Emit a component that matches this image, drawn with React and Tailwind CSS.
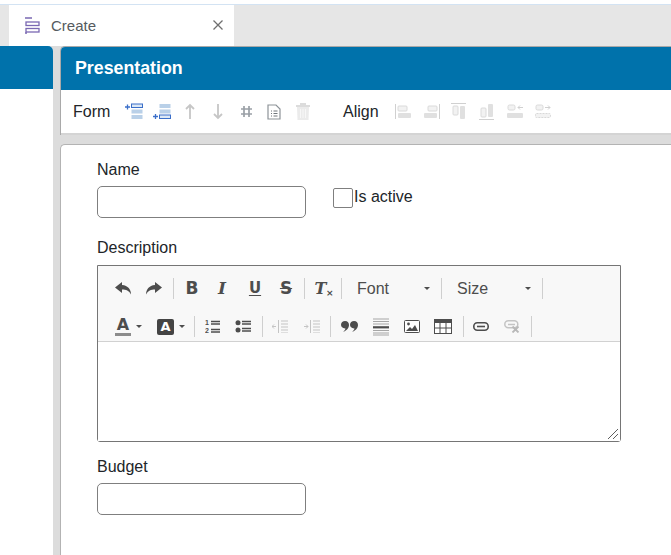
const Ico = ({ w = 16, h = 16, children, className = "" }) => (
  <svg width={w} height={h} viewBox={`0 0 ${w} ${h}`} className={`shrink-0 ${className}`}>{children}</svg>
);

const Sep = ({ className = "" }) => <div className={`w-px h-[21px] bg-[#cfcfcf] shrink-0 ${className}`} />;

const Blue = "#3b6fc9", Pale = "#b9d0e8";

const formIcons = [
  <Ico w={19} h={17} key="a">
    <path d="M0 4h5M2.500 1.500v5" stroke={Blue} strokeWidth="1.300" />
    <rect x="6.500" y="1" width="11" height="3.500" fill="#dce8f5" stroke={Blue} />
    <rect x="6.500" y="6.500" width="11" height="4" fill={Pale} />
    <rect x="6.500" y="12" width="11" height="4" fill={Pale} />
  </Ico>,
  <Ico w={19} h={17} key="b">
    <path d="M0 13.500h5M2.500 11v5" stroke={Blue} strokeWidth="1.300" />
    <rect x="6.500" y="1" width="11" height="4" fill={Pale} />
    <rect x="6.500" y="6.500" width="11" height="4" fill={Pale} />
    <rect x="6.500" y="12" width="11" height="3.500" fill="#dce8f5" stroke={Blue} />
  </Ico>,
  <Ico w={10} h={17} key="c"><path d="M5 16V2M1 6l4-4 4 4" stroke="#c6c6c6" strokeWidth="1.800" fill="none" /></Ico>,
  <Ico w={10} h={17} key="d"><path d="M5 1v14M1 11l4 4 4-4" stroke="#c6c6c6" strokeWidth="1.800" fill="none" /></Ico>,
  <Ico w={13} h={13} key="e"><path d="M4 1v11M9 1v11M1 4h11M1 9h11" stroke="#9aa0a6" strokeWidth="1.700" fill="none" /></Ico>,
  <Ico w={14} h={16} key="f">
    <path d="M1 1h8l4 4v10H1z" fill="#fff" stroke="#8d9398" strokeWidth="1.200" />
    <path d="M4 7h1M6.500 7h4M4 9.500h1M6.500 9.500h4M4 12h1M6.500 12h4" stroke="#70767b" />
  </Ico>,
  <Ico w={16} h={17} key="g">
    <path d="M1 3h14" stroke="#dcdcdc" strokeWidth="2" />
    <path d="M5 1h6" stroke="#dcdcdc" strokeWidth="2" />
    <path d="M2 4h12l-.500 13h-11z" fill="#ebebeb" />
    <path d="M5.500 6v9M8 6v9M10.500 6v9" stroke="#f7f7f7" />
  </Ico>,
];

const alignIcons = [
  <Ico w={17} h={16} key="a"><path d="M.500 0v15" stroke="#d0d0d0" /><rect x="3" y="2" width="9" height="5" rx="1" fill="#f2f2f2" stroke="#dadada" /><rect x="3" y="9" width="13" height="5" rx="1" fill="#e0e0e0" /></Ico>,
  <Ico w={17} h={16} key="b"><path d="M16.500 0v15" stroke="#d0d0d0" /><rect x="5" y="2" width="9" height="5" rx="1" fill="#f2f2f2" stroke="#dadada" /><rect x="1" y="9" width="13" height="5" rx="1" fill="#e0e0e0" /></Ico>,
  <Ico w={16} h={17} key="c"><path d="M0 .500h15" stroke="#d0d0d0" /><rect x="2" y="3" width="5" height="9" rx="1" fill="#f2f2f2" stroke="#dadada" /><rect x="9" y="3" width="5" height="13" rx="1" fill="#e0e0e0" /></Ico>,
  <Ico w={16} h={17} key="d"><path d="M0 16.500h15" stroke="#d0d0d0" /><rect x="2" y="5" width="5" height="9" rx="1" fill="#f2f2f2" stroke="#dadada" /><rect x="9" y="1" width="5" height="13" rx="1" fill="#e0e0e0" /></Ico>,
  <Ico w={17} h={15} key="e"><rect x="1" y="1" width="7" height="5" rx="1.500" fill="#f2f2f2" stroke="#dadada" /><path d="M16 3.500h-5M13 1.500l-2 2 2 2" stroke="#d0d0d0" fill="none" /><rect x="0" y="9" width="16" height="5" rx="1" fill="#e0e0e0" /></Ico>,
  <Ico w={17} h={15} key="f"><rect x="1" y="1" width="7" height="5" rx="1.500" fill="#f2f2f2" stroke="#dadada" /><path d="M10 3.500h5M13 1.500l2 2-2 2" stroke="#d0d0d0" fill="none" /><rect x=".500" y="9.500" width="15" height="4" rx="1" fill="#f2f2f2" stroke="#d8d8d8" strokeDasharray="2 1" /></Ico>,
];

const dark = "#4d4d4d";
const Caret = () => <span className="w-0 h-0 border-x-[3px] border-x-transparent border-t-[3px] border-t-[#4d4d4d] shrink-0" />;

const Tb = ({ w = 24, children }) => (
  <div className="flex items-center justify-center h-[21px] shrink-0" style={{ width: w }}>{children}</div>
);

const Undo = ({ flip }) => (
  <Ico w={17} h={13} className={flip ? "-scale-x-100" : ""}>
    <path d="M7 0L0 5.500 7 11V7.500c4 0 7 1 9 5 0-5-3-9-9-9.500z" fill={dark} />
  </Ico>
);

const Bold = { fontFamily: '"DejaVu Sans", sans-serif' };
const Serif = { fontFamily: '"DejaVu Serif", serif' };

const Select = ({ label, w }) => (
  <div className="flex items-center justify-between pl-[15px] pr-[11px] text-[16px] leading-none text-[#4d4d4d] shrink-0" style={{ width: w }}>
    <span>{label}</span>
    <Caret />
  </div>
);

export default function App() {
  return (
    <div className="w-[671px] h-[555px] overflow-hidden flex flex-col bg-white text-[16px] text-[#212529]" style={{ fontFamily: '"Liberation Sans", Arial, sans-serif' }}>
      <div className="h-[5px] shrink-0 bg-white border-b border-[#d3e3f3]" />
      <div className="h-[41px] shrink-0 bg-[#e6e6e6] pl-[9px] flex">
        <div className="w-[225px] bg-white flex items-center pl-[16px] pr-[11px]">
          <Ico w={15} h={17}>
            <path d="M0 1h7M0 16h2" stroke="#7a68b3" strokeWidth="1.400" />
            <rect x="1" y="5" width="13" height="3.500" fill="none" stroke="#7a68b3" strokeWidth="1.300" />
            <rect x="1" y="11.500" width="13" height="3.500" fill="none" stroke="#7a68b3" strokeWidth="1.300" />
          </Ico>
          <span className="ml-[11px] text-[15px] leading-none text-[#555b60]">Create</span>
          <svg width="10" height="10" viewBox="0 0 10 10" className="ml-auto -mt-[1px]">
            <path d="M.500.500l9 9M9.500.500l-9 9" stroke="#6f6f6f" strokeWidth="1.300" />
          </svg>
        </div>
      </div>

      <div className="flex-1 flex min-h-0 bg-[#dcdcdc]">
        <div className="w-[53px] shrink-0 bg-white rounded-tr-[5px] overflow-hidden">
          <div className="h-[43px] bg-[#0072ab]" />
        </div>

        <div className="ml-[7px] flex-1 flex flex-col min-w-0">
          <div className="shrink-0 bg-white border-t border-l border-[#a9a9a9] rounded-tl-[5px] overflow-hidden border-b-0">
            <div className="h-[43px] bg-[#0072ab] flex items-center pl-[14px] text-white font-bold text-[17.800px]">Presentation</div>
            <div className="h-[45px] flex items-center border-b-2 border-[#d4d4d4]">
              <span className="ml-[12px] w-[52px]">Form</span>
              <div className="flex items-center">
                <div className="w-[28px]">{formIcons[0]}</div>
                <div className="w-[32px]">{formIcons[1]}</div>
                <div className="w-[28px]">{formIcons[2]}</div>
                <div className="w-[27px]">{formIcons[3]}</div>
                <div className="w-[27px]">{formIcons[4]}</div>
                <div className="w-[28px]">{formIcons[5]}</div>
                <div className="w-[16px]">{formIcons[6]}</div>
              </div>
              <span className="ml-[32px] w-[52px]">Align</span>
              <div className="flex items-center">
                {alignIcons.map((ic, i) => <div key={i} className="w-[28px]">{ic}</div>)}
              </div>
            </div>
          </div>

          <div className="mt-[9px] flex-1 bg-white border-t border-l border-[#b3b3b3] rounded-tl-[5px] pl-[36px] pt-[15px]">
            <div className="flex items-start">
              <div className="flex flex-col">
                <label className="leading-[20px]">Name</label>
                <div className="mt-[6px] w-[209px] h-[32px] rounded-[5px] border border-[#7f7f7f] bg-white" />
              </div>
              <div className="ml-[27px] mt-[28px] flex items-start">
                <div className="w-[20px] h-[20px] rounded-[2px] border border-[#7f7f7f] bg-white" />
                <span className="ml-[1px] leading-[20px] -mt-[1px] text-[16px]">Is active</span>
              </div>
            </div>

            <label className="block mt-[20px] leading-[20px]">Description</label>
            <div className="mt-[7px] w-[524px] h-[177px] border border-[#757575] rounded-b-[3px] flex flex-col relative">
              <div className="h-[76px] bg-[#f8f8f8] border-b border-[#d1d1d1] pl-[5px] pt-[12px] flex flex-col gap-[17px]">
                <div className="flex items-center h-[21px]">
                  <Tb w={40}><Undo /></Tb>
                  <Tb w={20}><Undo flip /></Tb>
                  <Sep className="ml-[10px]" />
                  <Tb w={36}><span className="font-bold text-[17px] leading-none text-[#4d4d4d]" style={Bold}>B</span></Tb>
                  <Tb w={24}><span className="font-bold italic text-[17px] leading-none text-[#4d4d4d]" style={Serif}>I</span></Tb>
                  <Tb w={42}><span className="font-bold text-[15px] leading-none underline underline-offset-2 text-[#4d4d4d]" style={Bold}>U</span></Tb>
                  <Tb w={20}><span className="font-bold text-[17px] leading-none line-through text-[#4d4d4d]" style={Bold}>S</span></Tb>
                  <Sep className="ml-[8px]" />
                  <Tb w={36}>
                    <span className="relative font-bold italic text-[16px] leading-none text-[#4d4d4d] pr-[5px]" style={Serif}>
                      T<span className="absolute right-[-2px] -bottom-[1px] not-italic text-[9px] leading-none" style={Bold}>×</span>
                    </span>
                  </Tb>
                  <Sep />
                  <Select label="Font" w={99} />
                  <Sep />
                  <Select label="Size" w={100} />
                  <Sep />
                </div>
                <div className="flex items-center h-[21px]">
                  <div className="w-[48px] shrink-0 pl-[12px] flex items-center gap-[5px]">
                    <span className="w-[16px] text-center font-bold text-[16px] leading-[16px] text-[#4d4d4d] border-b-[3px] border-[#8c8c8c]" style={Bold}>A</span>
                    <Caret />
                  </div>
                  <div className="ml-[6px] shrink-0 flex items-center gap-[5px]">
                    <span className="w-[17px] h-[16px] rounded-[2px] bg-[#444] text-white font-bold text-[13px] leading-[16px] text-center" style={Bold}>A</span>
                    <Caret />
                  </div>
                  <Sep className="ml-[9px]" />
                  <Tb w={34}>
                    <Ico w={15} h={15}>
                      <text x="0" y="6" fontSize="7" fontWeight="700" fill={dark} fontFamily="Liberation Sans">1</text>
                      <text x="0" y="14" fontSize="7" fontWeight="700" fill={dark} fontFamily="Liberation Sans">2</text>
                      <path d="M6 2.500h9M6 5h9M6 10.500h9M6 13h9" stroke={dark} strokeWidth="1.300" />
                    </Ico>
                  </Tb>
                  <Tb w={28}>
                    <Ico w={16} h={13}>
                      <circle cx="3" cy="2.800" r="2.500" fill={dark} /><circle cx="3" cy="10" r="2.500" fill={dark} />
                      <path d="M7 1.500h9M7 4h9M7 8.500h9M7 11h9" stroke={dark} strokeWidth="1.300" />
                    </Ico>
                  </Tb>
                  <Sep className="ml-[5px]" />
                  <Tb w={34}>
                    <Ico w={16} h={13}>
                      <path d="M0 6.500h4M2 4.500L0 6.500l2 2M6.500 0v13M9 1h7M9 4h7M9 7h7M9 10h7M9 13h7" stroke="#c4c4c4" fill="none" />
                    </Ico>
                  </Tb>
                  <Tb w={30}>
                    <Ico w={16} h={13}>
                      <path d="M0 6.500h4M2 4.500l2 2-2 2M6.500 0v13M9 1h7M9 4h7M9 7h7M9 10h7M9 13h7" stroke="#c4c4c4" fill="none" />
                    </Ico>
                  </Tb>
                  <Sep className="ml-[3px]" />
                  <Tb w={36}>
                    <Ico w={17} h={11}>
                      <path d="M4 0C6.800 0 8 1.800 8 4c0 3-2.500 5.800-6 7 1.300-1.200 2.200-2.400 2.500-3.600C1.800 7.600 0 6 0 3.800 0 1.500 1.800 0 4 0z" fill={dark} />
                      <path d="M13 0c2.800 0 4 1.800 4 4 0 3-2.500 5.800-6 7 1.300-1.200 2.200-2.400 2.500-3.600C10.800 7.600 9 6 9 3.800 9 1.500 10.800 0 13 0z" fill={dark} />
                    </Ico>
                  </Tb>
                  <Tb w={28}>
                    <Ico w={16} h={18}>
                      <path d="M0 1h16M0 3.500h16M0 6h16M0 12.500h16M0 15h16M0 17h16" stroke="#a6a6a6" strokeWidth="1" />
                      <path d="M0 9.300h16" stroke={dark} strokeWidth="2.200" />
                    </Ico>
                  </Tb>
                  <Tb w={34}>
                    <Ico w={16} h={13}>
                      <rect x=".500" y=".500" width="15" height="12" rx="1" fill="#fff" stroke={dark} />
                      <circle cx="4.500" cy="4" r="1.400" fill={dark} />
                      <path d="M2 11l4-4 2 2 3-4 3 6z" fill={dark} />
                    </Ico>
                  </Tb>
                  <Tb w={28}>
                    <Ico w={18} h={15}>
                      <rect x=".500" y=".500" width="17" height="14" fill="#fff" stroke={dark} />
                      <rect x="0" y="0" width="18" height="4" fill={dark} />
                      <path d="M6 4v10M12 4v10M1 9h16" stroke={dark} />
                    </Ico>
                  </Tb>
                  <Sep className="ml-[6px]" />
                  <Tb w={34}>
                    <Ico w={16} h={9}>
                      <rect x=".800" y=".800" width="14.400" height="7.400" rx="3.500" fill="none" stroke={dark} strokeWidth="1.600" />
                      <path d="M4 4.500h8" stroke={dark} strokeWidth="1.600" />
                    </Ico>
                  </Tb>
                  <Tb w={28}>
                    <Ico w={16} h={13}>
                      <rect x=".800" y=".800" width="13" height="7" rx="3.500" fill="none" stroke="#c4c4c4" strokeWidth="1.500" />
                      <path d="M4 4.500h7" stroke="#c4c4c4" strokeWidth="1.500" />
                      <path d="M8.500 6.500l6 6M14.500 6.500l-6 6" stroke="#b8b8b8" strokeWidth="1.800" />
                    </Ico>
                  </Tb>
                  <Sep className="ml-[5px]" />
                </div>
              </div>
              <div className="flex-1 bg-white" />
              <svg width="12" height="12" viewBox="0 0 12 12" className="absolute right-[1px] bottom-[1px]">
                <path d="M1 11L11 1M6 11l5-5" stroke="#5f5f5f" strokeWidth="1" />
              </svg>
            </div>

            <label className="block mt-[15px] leading-[20px]">Budget</label>
            <div className="mt-[6px] w-[209px] h-[32px] rounded-[5px] border border-[#7f7f7f] bg-white" />
          </div>
        </div>
      </div>
    </div>
  );
}
